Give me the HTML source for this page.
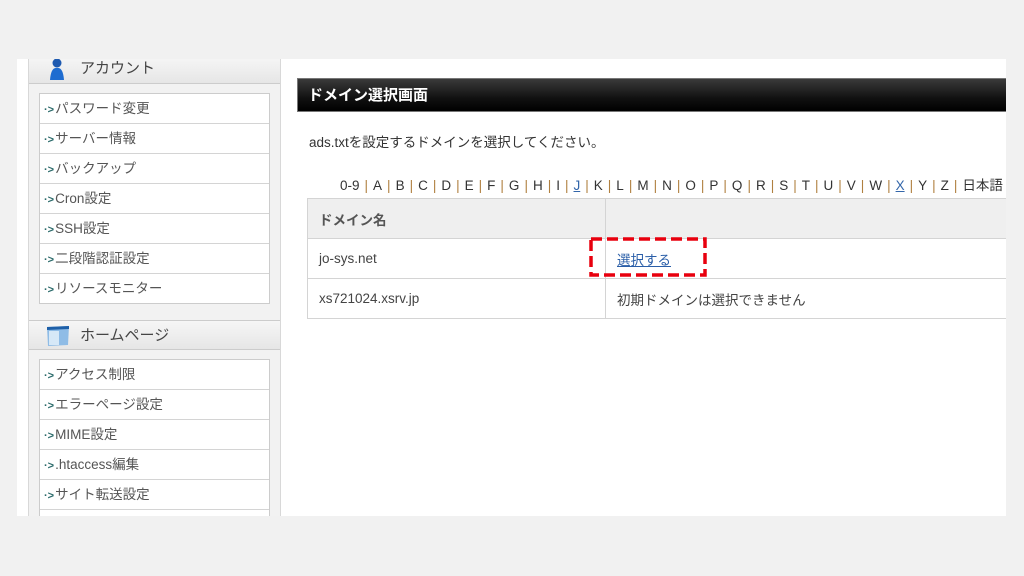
<!DOCTYPE html>
<html><head><meta charset="utf-8"><style>
body{margin:0;width:1024px;height:576px;background:#f1f1f1;position:relative;overflow:hidden;font-family:"Liberation Sans","Noto Sans CJK JP",sans-serif;color:#333}
.frame{position:absolute;left:17px;top:59px;width:989px;height:457px;background:#fff;overflow:hidden}
.side{position:absolute;left:11px;top:-2px;width:251px;height:470px;background:#f2f2f2;border-left:1px solid #d8d8d8;border-right:1px solid #d8d8d8}
.hd{position:absolute;left:0;width:251px;height:26px;background:linear-gradient(#f6f6f6,#e6e6e6);border-bottom:1px solid #ccc;font-size:15px;color:#444}
.hd span{position:absolute;left:51px;top:0px}
.items{position:absolute;left:10px;width:229px;border:1px solid #ccc;background:#fff}
.it{height:29px;border-bottom:1px solid #d4d4d4;font-size:13.5px;line-height:29px;padding-left:4px;color:#555}
.it:last-child{border-bottom:none}
.it b{color:#2a6a6a;font-weight:bold;font-size:11px;margin-right:1px}
.title{position:absolute;left:280px;top:19px;width:720px;height:34px;background:linear-gradient(#3a3a3a,#111 60%,#000);border:1px solid #777;color:#fff;font-weight:bold;font-size:15px;line-height:34px;padding-left:10px;box-sizing:border-box}
.txt{position:absolute;left:292px;top:72px;font-size:13.5px;color:#333}
.letters{position:absolute;left:323px;top:115px;font-size:13.5px;color:#333;white-space:nowrap}
.letters i{font-style:normal;color:#b08040;margin:0 5px}
.letters a{color:#3366aa;text-decoration:underline}
table{position:absolute;left:290px;top:139px;width:720px;border-collapse:collapse;font-size:13.5px}
td{border:1px solid #d4d4d4;height:39px;padding:0 11px;color:#444;vertical-align:middle}
tr.h td{background:#efefef}
.sel{color:#2a5ea8;text-decoration:underline}
.red{position:absolute;left:572px;top:178px}
</style></head><body>
<div class="frame">
 <div class="side">
  <div class="hd" style="top:0"><svg style="position:absolute;left:20px;top:0" width="16" height="24"><circle cx="8" cy="6" r="4.5" fill="#1e5ab0"/><path d="M1 23 Q2 10 8 11 Q14 10 15 23Z" fill="#1e6cd0"/></svg><span>アカウント</span></div>
  <div class="items" style="top:36px">
   <div class="it"><b>·&gt;</b>パスワード変更</div><div class="it"><b>·&gt;</b>サーバー情報</div><div class="it"><b>·&gt;</b>バックアップ</div><div class="it"><b>·&gt;</b>Cron設定</div><div class="it"><b>·&gt;</b>SSH設定</div><div class="it"><b>·&gt;</b>二段階認証設定</div><div class="it"><b>·&gt;</b>リソースモニター</div>
  </div>
  <div class="hd" style="top:263px;border-top:1px solid #ccc;height:28px"><svg style="position:absolute;left:17px;top:4px" width="24" height="22"><path d="M1 2 L23 1 L22 20 L2 21Z" fill="#8fbce6"/><path d="M1 2 L23 1 L23 4 L1 5Z" fill="#1d5fa8"/><rect x="3" y="6" width="10" height="14" fill="#d6e8f7"/></svg><span style="top:3px">ホームページ</span></div>
  <div class="items" style="top:302px">
   <div class="it"><b>·&gt;</b>アクセス制限</div><div class="it"><b>·&gt;</b>エラーページ設定</div><div class="it"><b>·&gt;</b>MIME設定</div><div class="it"><b>·&gt;</b>.htaccess編集</div><div class="it"><b>·&gt;</b>サイト転送設定</div><div class="it"></div>
  </div>
 </div>
 <div class="title">ドメイン選択画面</div>
 <div class="txt">ads.txtを設定するドメインを選択してください。</div>
 <div class="letters">0-9<i>|</i>A<i>|</i>B<i>|</i>C<i>|</i>D<i>|</i>E<i>|</i>F<i>|</i>G<i>|</i>H<i>|</i>I<i>|</i><a>J</a><i>|</i>K<i>|</i>L<i>|</i>M<i>|</i>N<i>|</i>O<i>|</i>P<i>|</i>Q<i>|</i>R<i>|</i>S<i>|</i>T<i>|</i>U<i>|</i>V<i>|</i>W<i>|</i><a>X</a><i>|</i>Y<i>|</i>Z<i>|</i>日本語</div>
 <table>
  <tr class="h"><td style="width:275px;font-weight:bold;color:#555">ドメイン名</td><td></td></tr>
  <tr><td>jo-sys.net</td><td><span class="sel">選択する</span></td></tr>
  <tr><td>xs721024.xsrv.jp</td><td>初期ドメインは選択できません</td></tr>
 </table>
 <svg class="red" width="120" height="42"><rect x="2" y="2" width="114" height="36" fill="none" stroke="#e8000e" stroke-width="3.5" stroke-dasharray="11 5"/></svg>
</div>
</body></html>
